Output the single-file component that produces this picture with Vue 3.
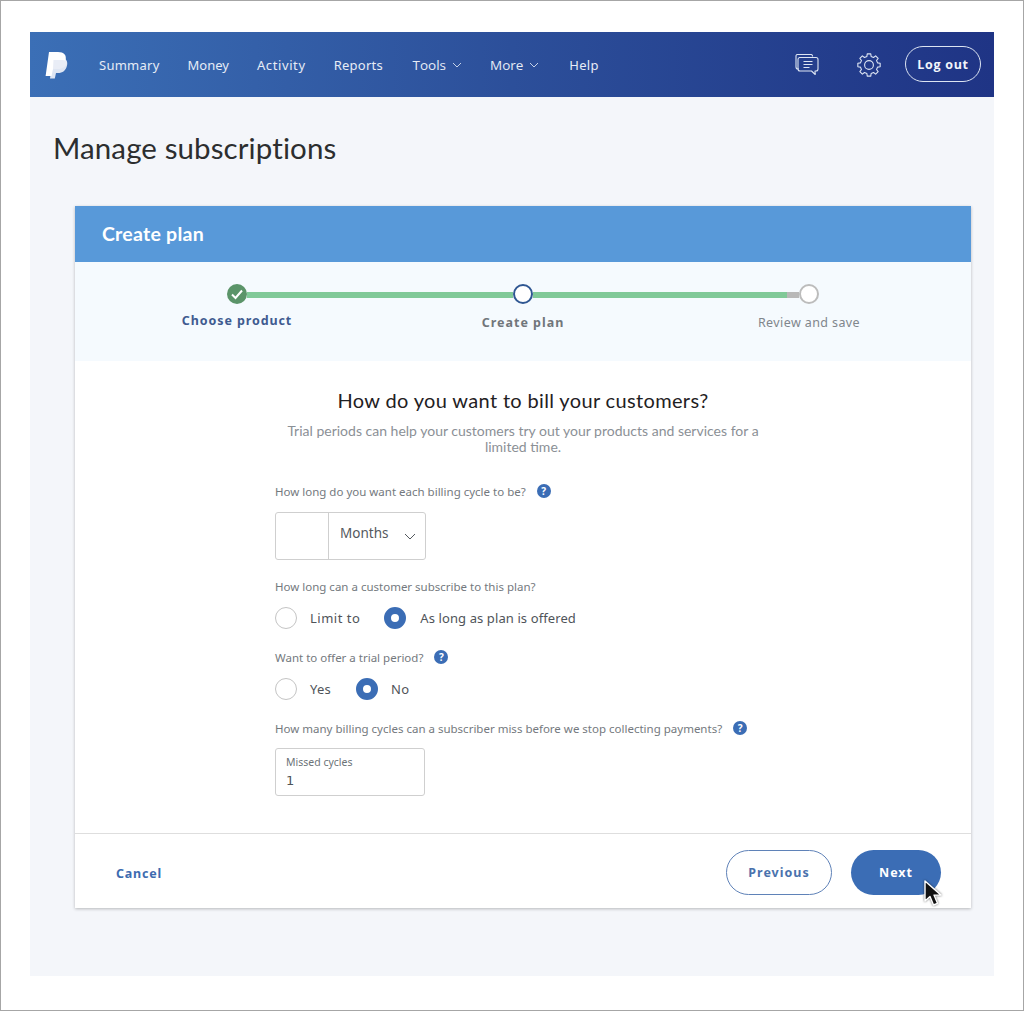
<script setup>
const navItems = [
  { label: 'Summary', spaced: true },
  { label: 'Money', spaced: true },
  { label: 'Activity', spaced: true },
  { label: 'Reports', spaced: true },
  { label: 'Tools', menu: true },
  { label: 'More', menu: true },
  { label: 'Help', spaced: true },
]

// 8 blocky teeth, one of them straight up
function gearPath() {
  let d = ''
  for (let i = 0; i < 8; i++) {
    const a = i * 45 - 90
    const pts = [[8.8, a - 14], [11.3, a - 9], [11.3, a + 9], [8.8, a + 14]]
    pts.forEach(([r, deg], n) => {
      const rad = (deg * Math.PI) / 180
      const x = (12 + r * Math.cos(rad)).toFixed(2)
      const y = (12 + r * Math.sin(rad)).toFixed(2)
      d += (i === 0 && n === 0 ? 'M' : 'L') + x + ' ' + y
    })
  }
  return d + 'Z'
}
const gear = gearPath()
</script>

<template>
  <div class="frame">
    <div class="shell">
      <header class="nav">
        <svg class="logo" viewBox="0 0 24 28" aria-hidden="true">
          <path fill="#dfe6f3" d="M8 7h8c5 0 7 3 6 7.500-1 5-4.500 7.500-9 7.500h-2l-1.200 5.500H5z" />
          <path fill="#fff" d="M4 1h9c6 0 8.700 3 7.700 8-.9 6-5.300 9-10.700 9H8l-1.500 7H.6z" />
          <path fill="#e9edf6" d="M8.500 9h8.700c2.800 0 4.300 1 4.800 2.500-.9 4.300-4.800 6.500-9 6.500H8z" />
        </svg>
        <nav class="links">
          <a v-for="item in navItems" :key="item.label" class="link" :class="{ spaced: item.spaced }">
            {{ item.label }}
            <svg v-if="item.menu" class="caret" viewBox="0 0 10 6" aria-hidden="true">
              <path d="M1 1l4 4 4-4" />
            </svg>
          </a>
        </nav>
        <div class="nav-right">
          <svg class="icon chat" viewBox="0 0 24 22" aria-hidden="true">
            <path d="M17.500 2.500V2a1.500 1.500 0 0 0-1.500-1.500H2.500A1.500 1.500 0 0 0 1 2v11a2 2 0 0 0 2 2h1" />
            <path d="M5 3.500h16.500a2 2 0 0 1 2 2V15a2 2 0 0 1-2 2h-1l.2 3.500-3.700-3.500H5.500a2 2 0 0 1-2-2V5.500a2 2 0 0 1 1.500-2z" transform="translate(-.5 0)" />
            <path d="M9 8h9M9 11h9M9 14h6" transform="translate(-.5 -.5)" />
          </svg>
          <svg class="icon gear" viewBox="0 0 24 24" aria-hidden="true">
            <circle cx="12" cy="12" r="4.400" />
            <path :d="gear" />
          </svg>
          <button class="logout">Log out</button>
        </div>
      </header>

      <main class="content">
        <h1 class="title">Manage subscriptions</h1>

        <section class="card">
          <h2 class="card-head">Create plan</h2>

          <div class="stepper">
            <div class="track">
              <span class="dot done">
                <svg viewBox="0 0 20 20" aria-hidden="true"><path d="M5 10.500l3.500 3.500L15 6.500" /></svg>
              </span>
              <span class="line"></span>
              <span class="dot current"></span>
              <span class="line last"></span>
              <span class="dot todo"></span>
            </div>
            <div class="step-labels">
              <span class="step-label first">Choose product</span>
              <span class="step-label active">Create plan</span>
              <span class="step-label">Review and save</span>
            </div>
          </div>

          <div class="body">
            <h3 class="question">How do you want to bill your customers?</h3>
            <p class="sub">Trial periods can help your customers try out your products and services for a limited time.</p>

            <form class="form">
              <div class="label label-1">How long do you want each billing cycle to be? <i class="help">?</i></div>
              <div class="combo">
                <span class="combo-num"></span>
                <span class="combo-select">
                  Months
                  <svg class="select-caret" viewBox="0 0 12 7" aria-hidden="true"><path d="M1 1l5 5 5-5" /></svg>
                </span>
              </div>

              <div class="label label-2">How long can a customer subscribe to this plan?</div>
              <div class="radios">
                <span class="radio"></span><span class="radio-text first-text">Limit to</span>
                <span class="radio on"></span><span class="radio-text offered">As long as plan is offered</span>
              </div>

              <div class="label label-3">Want to offer a trial period? <i class="help">?</i></div>
              <div class="radios">
                <span class="radio"></span><span class="radio-text yes">Yes</span>
                <span class="radio on"></span><span class="radio-text">No</span>
              </div>

              <div class="label label-4">How many billing cycles can a subscriber miss before we stop collecting payments? <i class="help">?</i></div>
              <div class="missed">
                <span class="missed-label">Missed cycles</span>
                <span class="missed-value">1</span>
              </div>
            </form>
          </div>

          <footer class="card-foot">
            <a class="cancel">Cancel</a>
            <div class="foot-buttons">
              <button class="btn outline">Previous</button>
              <button class="btn solid">Next</button>
            </div>
            <svg class="cursor" viewBox="0 0 18 27" aria-hidden="true">
              <path d="M1 1v20l5-4.500 3.500 8.500 4-1.700-3.500-8.200h7z" fill="#111" stroke="#fff" stroke-width="1.400" stroke-linejoin="round" />
            </svg>
          </footer>
        </section>
      </main>
    </div>
  </div>
</template>

<style>
body {
  background: #fff;
}
</style>

<style scoped>
.frame {
  box-sizing: border-box;
  width: 1024px;
  height: 1011px;
  padding: 31px 29px 34px;
  border: 1px solid #a6a6a6;
  background: #fff;
  font-family: "Noto Sans", "Open Sans", sans-serif;
}

.shell {
  display: flex;
  flex-direction: column;
  height: 944px;
  background: #f4f6fa;
}

.nav {
  display: flex;
  align-items: center;
  flex: none;
  height: 65px;
  padding: 0 13px 0 15px;
  background: linear-gradient(90deg, #3b6fb6 0%, #2c4f9a 50%, #1f3485 100%);
}

.logo {
  flex: none;
  width: 24px;
  height: 28px;
}

.links {
  display: flex;
  align-items: center;
  gap: 28px;
  margin: 1px 0 0 30px;
}

.link {
  display: flex;
  align-items: center;
  color: #e6ecf6;
  font-family: "Open Sans", sans-serif;
  font-size: 13.500px;
}

.link.spaced {
  font-family: "Noto Sans", sans-serif;
  font-size: 13px;
  letter-spacing: 0.25px;
}

.link.spaced:nth-child(2) {
  letter-spacing: 0;
}

.link.spaced:nth-child(3) {
  letter-spacing: 0.6px;
}

.link:nth-child(5) {
  margin-left: 1.500px;
}

.link:nth-child(7) {
  margin-left: 2px;
}

.caret {
  width: 10px;
  height: 6px;
  margin-left: 6px;
  fill: none;
  stroke: #c5d2e8;
  stroke-width: 1;
}

.nav-right {
  display: flex;
  align-items: center;
  margin-left: auto;
}

.icon {
  fill: none;
  stroke: #dde5f3;
  stroke-width: 1.100;
  stroke-linejoin: round;
}

.chat {
  width: 24px;
  height: 22px;
  margin-right: 38px;
}

.gear {
  width: 24px;
  height: 24px;
  margin-right: 24px;
}

.logout {
  width: 76px;
  height: 36px;
  margin-top: -1px;
  padding: 0;
  border: 1px solid #dce4f2;
  border-radius: 18px;
  background: transparent;
  color: #f2f5fb;
  font-family: "Open Sans", sans-serif;
  font-size: 12.500px;
  font-weight: 700;
  letter-spacing: 0.7px;
}

.content {
  flex: 1;
  padding: 0 23px 0 23px;
}

.title {
  margin: 31px 0 38px;
  color: #2c2e2f;
  font-family: Lato, sans-serif;
  font-size: 29.500px;
  font-weight: 400;
  line-height: 40px;
  letter-spacing: 0.1px;
}

.card {
  width: 896px;
  margin-left: 22px;
  background: #fff;
  box-shadow: 0 1px 3px rgba(0, 0, 0, 0.25);
}

.card-head {
  height: 56px;
  margin: 0;
  padding-left: 27px;
  background: #5899d9;
  color: #fff;
  font-family: Lato, sans-serif;
  font-size: 19.500px;
  font-weight: 700;
  line-height: 56px;
  letter-spacing: 0.25px;
}

.stepper {
  box-sizing: border-box;
  height: 99px;
  padding-top: 22px;
  background: #f5fafe;
}

.track {
  display: flex;
  align-items: center;
  width: 592px;
  height: 20px;
  margin: 0 auto;
}

.dot {
  box-sizing: border-box;
  flex: none;
  width: 20px;
  height: 20px;
  border-radius: 50%;
}

.done {
  background: #5b9469;
}

.done svg {
  display: block;
  fill: none;
  stroke: #fff;
  stroke-width: 2;
}

.current {
  border: 2px solid #2f5792;
  background: #fff;
}

.todo {
  border: 2px solid #bcbcbc;
  background: #fff;
}

.line {
  flex: 1;
  height: 6px;
  margin-top: 1px;
  background: #80c998;
}

.line.last {
  background: linear-gradient(90deg, #80c998 0, #80c998 95.500%, #b8b8b8 95.500%);
}

.step-labels {
  display: grid;
  grid-template-columns: repeat(3, 286px);
  justify-content: center;
  margin-top: 10px;
  text-align: center;
}

.step-label {
  color: #80868c;
  font-size: 12.500px;
  line-height: 18px;
  letter-spacing: 0.4px;
}

.step-label.first {
  margin-top: -2px;
  color: #3f5b90;
  font-weight: 700;
  letter-spacing: 0.9px;
}

.step-label.active {
  color: #71767b;
  font-weight: 700;
  letter-spacing: 1px;
}

.body {
  box-sizing: border-box;
  height: 473px;
  padding-top: 26px;
  border-bottom: 1px solid #dedede;
}

.question {
  margin: 0;
  color: #1f2123;
  font-family: Lato, sans-serif;
  font-size: 20px;
  font-weight: 400;
  line-height: 26px;
  text-align: center;
  letter-spacing: 0.35px;
}

.sub {
  width: 500px;
  margin: 10px auto 0;
  color: #8b9096;
  font-family: Lato, sans-serif;
  font-size: 14px;
  line-height: 16px;
  text-align: center;
}

.form {
  width: 496px;
  margin: 0 auto;
}

.label {
  display: flex;
  align-items: center;
  color: #74797e;
  font-size: 11.500px;
  line-height: 16px;
}

.label-1 {
  margin-top: 29px;
}

.label-2 {
  margin-top: 19px;
}

.label-3,
.label-4 {
  margin-top: 20px;
}

.help {
  display: inline-block;
  width: 14px;
  height: 14px;
  margin: -3px 0 0 11px;
  border-radius: 50%;
  background: #3b6db5;
  color: #fff;
  font-family: "Noto Sans", sans-serif;
  font-size: 10px;
  font-style: normal;
  font-weight: 700;
  line-height: 14px;
  text-align: center;
}

.combo {
  box-sizing: border-box;
  display: flex;
  width: 151px;
  height: 48px;
  margin-top: 12px;
  border: 1px solid #cfcfcf;
  border-radius: 3px;
}

.combo-num {
  width: 52px;
  border-right: 1px solid #cfcfcf;
}

.combo-select {
  position: relative;
  flex: 1;
  padding-left: 11px;
  color: #54595e;
  font-size: 13.500px;
  line-height: 41px;
}

.select-caret {
  position: absolute;
  top: 20px;
  right: 9px;
  width: 12px;
  height: 7px;
  fill: none;
  stroke: #54595e;
  stroke-width: 1;
}

.radios {
  display: flex;
  align-items: center;
  height: 24px;
  margin-top: 11px;
}

.radio {
  box-sizing: border-box;
  flex: none;
  width: 22px;
  height: 22px;
  border: 1px solid #c4c4c4;
  border-radius: 50%;
  background: #fff;
}

.radio.on {
  border: 7.500px solid #3b6db5;
}

.radio-text {
  margin-left: 13px;
  color: #4f5459;
  font-size: 13px;
  letter-spacing: 0.25px;
}

.radio-text.offered {
  margin-left: 14px;
  letter-spacing: 0.1px;
}

.first-text {
  margin-right: 24px;
  letter-spacing: 0.5px;
}

.yes {
  margin-right: 25px;
}

.missed {
  box-sizing: border-box;
  display: flex;
  flex-direction: column;
  width: 150px;
  height: 48px;
  margin-top: 11px;
  padding: 6px 10px;
  border: 1px solid #cfcfcf;
  border-radius: 3px;
}

.missed-label {
  color: #6c7378;
  font-size: 10.500px;
  line-height: 14px;
}

.missed-value {
  margin-top: 2px;
  color: #4f5459;
  font-family: "DejaVu Sans", sans-serif;
  font-size: 13px;
  line-height: 20px;
}

.card-foot {
  position: relative;
  display: flex;
  align-items: center;
  justify-content: space-between;
  height: 74px;
  padding: 0 30px 0 41px;
}

.cancel {
  margin-top: 4px;
  color: #3d6bb0;
  font-size: 12.500px;
  font-weight: 700;
  letter-spacing: 0.8px;
}

.foot-buttons {
  display: flex;
  gap: 19px;
  margin-top: 2px;
}

.btn {
  height: 45px;
  padding: 0;
  border-radius: 23px;
  font-family: "Noto Sans", sans-serif;
  font-size: 12.500px;
  font-weight: 700;
  letter-spacing: 1px;
}

.outline {
  width: 106px;
  border: 1px solid #5f82b8;
  background: #fff;
  color: #4a72ad;
}

.solid {
  width: 90px;
  border: none;
  background: #3b6db5;
  color: #fff;
}

.cursor {
  position: absolute;
  top: 46px;
  right: 29px;
  width: 18px;
  height: 27px;
  filter: drop-shadow(0 0 1px rgba(0, 0, 0, 0.6));
}
</style>
